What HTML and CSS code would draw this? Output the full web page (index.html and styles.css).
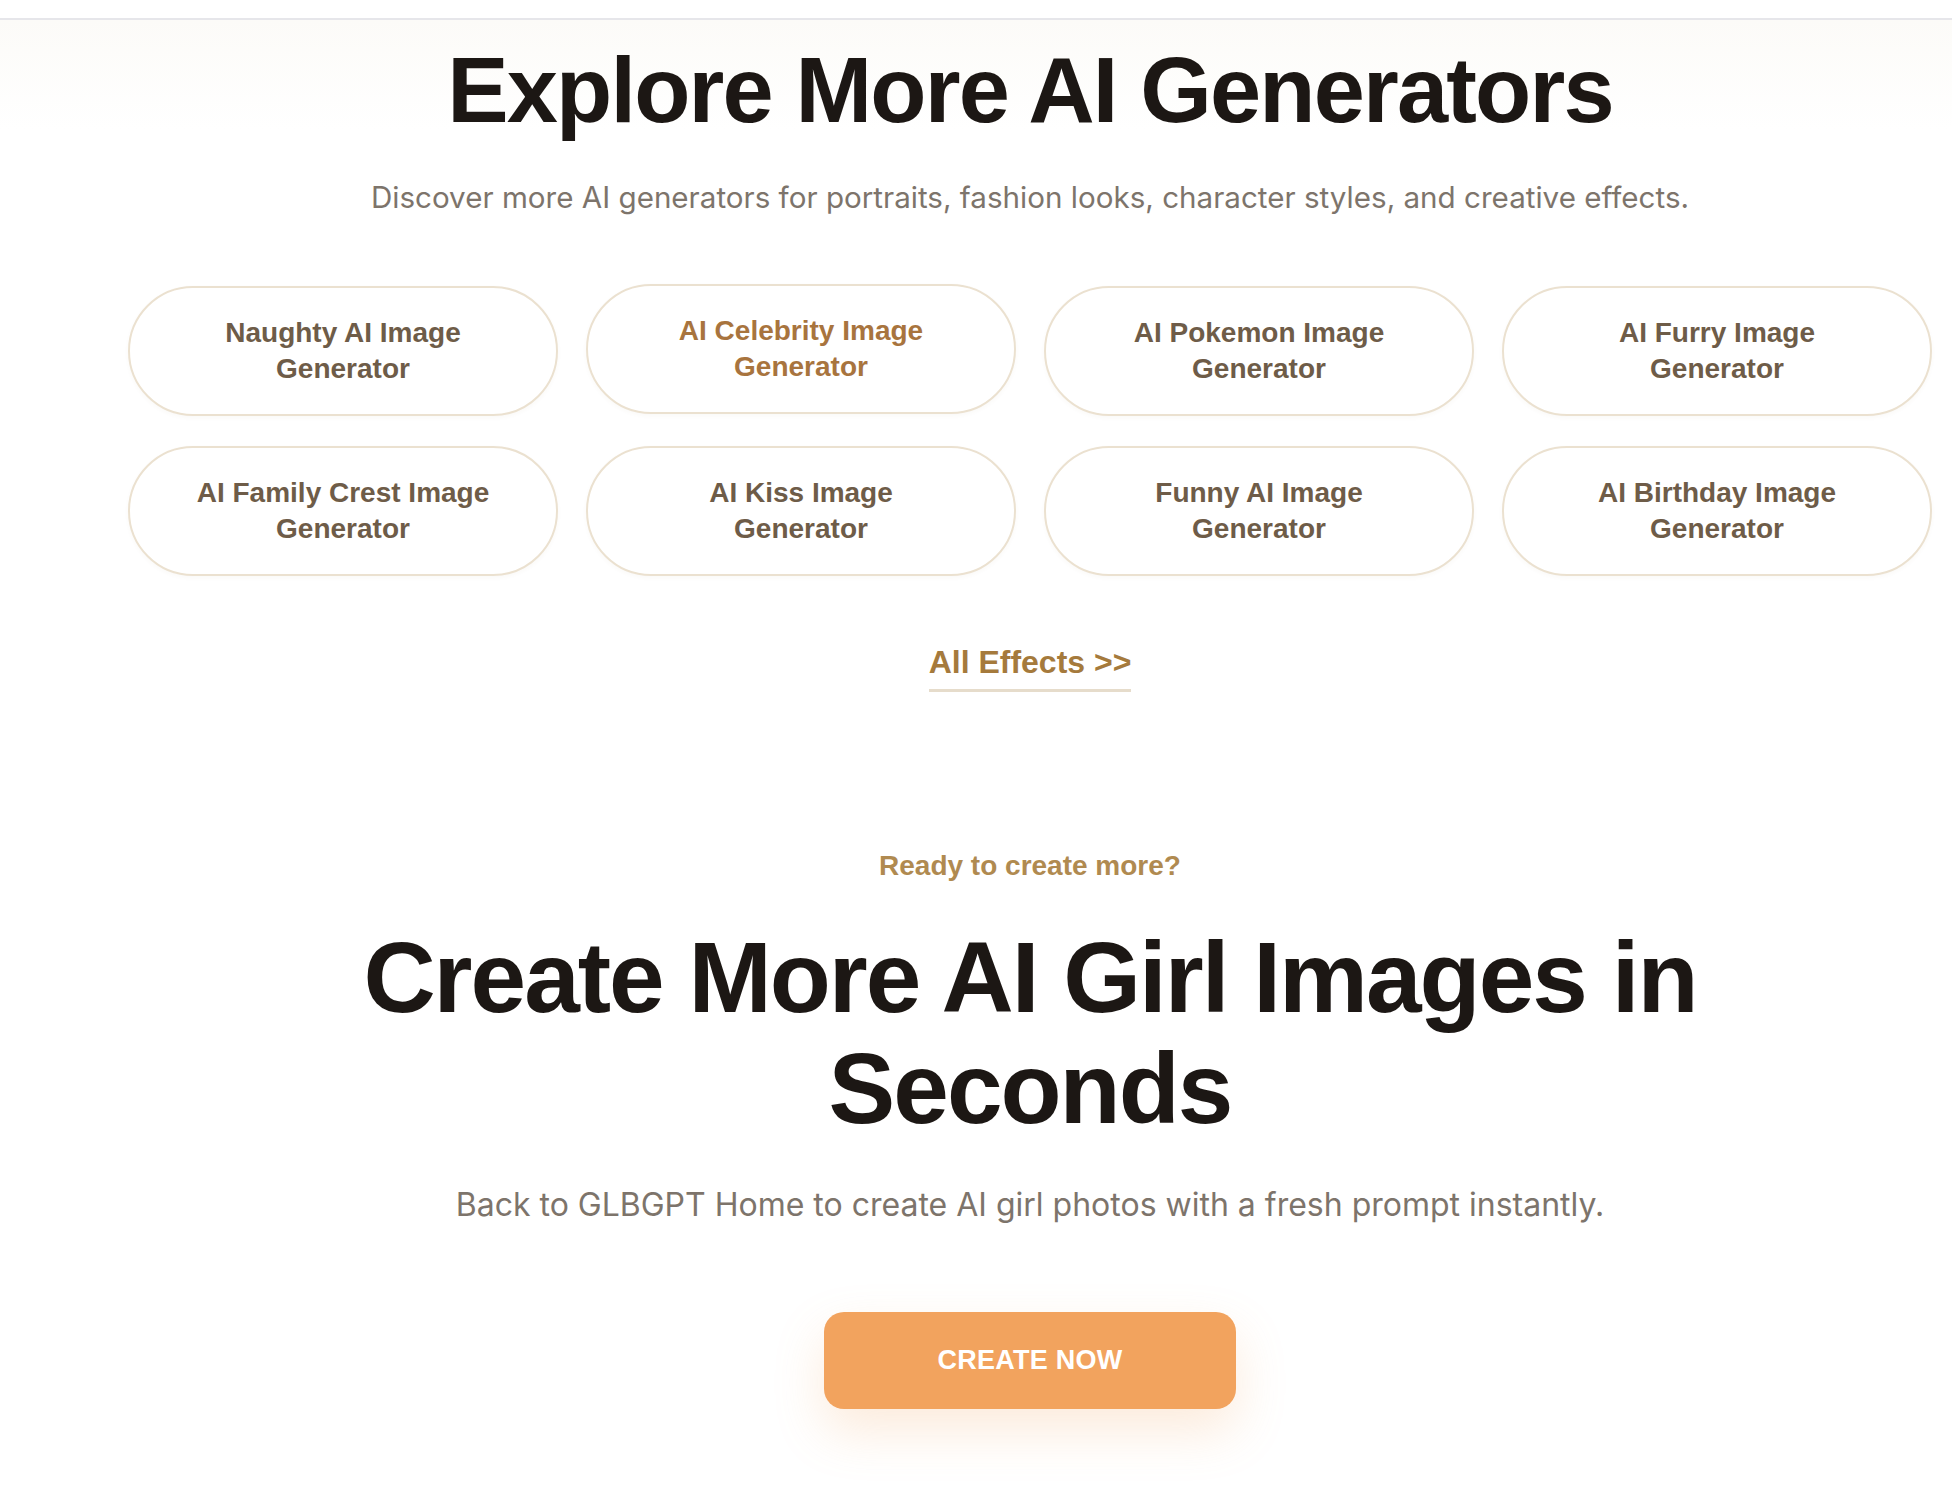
FILE: index.html
```html
<!DOCTYPE html>
<html lang="en">
<head>
<meta charset="utf-8">
<title>Explore More AI Generators</title>
<link rel="stylesheet" href="styles.css">
</head>
<body>
<div class="topbar"></div>
<main class="main">
  <section class="explore">
    <h1 class="explore-title">Explore More AI Generators</h1>
    <p class="explore-sub">Discover more AI generators for portraits, fashion looks, character styles, and creative effects.</p>
    <div class="pill-grid">
      <a class="pill" href="#">Naughty AI Image Generator</a>
      <a class="pill pill-active" href="#">AI Celebrity Image Generator</a>
      <a class="pill" href="#">AI Pokemon Image Generator</a>
      <a class="pill" href="#">AI Furry Image Generator</a>
      <a class="pill" href="#">AI Family Crest Image Generator</a>
      <a class="pill" href="#">AI Kiss Image Generator</a>
      <a class="pill" href="#">Funny AI Image Generator</a>
      <a class="pill" href="#">AI Birthday Image Generator</a>
    </div>
    <a class="all-effects" href="#">All Effects &gt;&gt;</a>
  </section>
  <section class="cta">
    <p class="cta-eyebrow">Ready to create more?</p>
    <h2 class="cta-title">Create More AI Girl Images in Seconds</h2>
    <p class="cta-text">Back to GLBGPT Home to create AI girl photos with a fresh prompt instantly.</p>
    <a class="cta-button" href="#">CREATE NOW</a>
  </section>
</main>
</body>
</html>
```
FILE: styles.css
```css
* { box-sizing: border-box; }
html, body { margin: 0; padding: 0; background: #ffffff; }
body {
  font-family: "Liberation Sans", Arial, sans-serif;
  color: #1c1714;
}
.topbar {
  height: 20px;
  background: #ffffff;
  border-bottom: 2px solid #e6e6ea;
}
.main {
  padding-left: 108px;
  background: linear-gradient(180deg, #fcfbf8 0px, #ffffff 110px);
}
.explore {
  display: flex;
  flex-direction: column;
  align-items: center;
  padding-top: 20px;
}
.explore-title {
  margin: 0;
  font-size: 92px;
  line-height: 1.1;
  font-weight: 700;
  letter-spacing: -0.02em;
  color: #1c1714;
}
.explore-sub {
  margin: 36px 0 0;
  font-family: Inter, "Liberation Sans", sans-serif;
  font-size: 29.6px;
  line-height: 1.4;
  color: #7d746b;
}
.pill-grid {
  margin-top: 67px;
  display: grid;
  grid-template-columns: repeat(4, 430px);
  grid-auto-rows: 130px;
  column-gap: 28px;
  row-gap: 30px;
}
.pill {
  display: flex;
  align-items: center;
  justify-content: center;
  text-align: center;
  padding: 0 58px;
  border: 2px solid #ebe1d0;
  border-radius: 65px;
  background: #ffffff;
  box-shadow: 0 2px 4px rgba(120, 90, 50, 0.04);
  color: #6e5c48;
  font-size: 28px;
  line-height: 36px;
  font-weight: 700;
  text-decoration: none;
}
.pill-active {
  color: #a8743e;
  transform: translateY(-2px);
}
.all-effects {
  margin-top: 67px;
  display: inline-block;
  font-size: 32px;
  line-height: 1.2;
  font-weight: 700;
  color: #a57a3c;
  text-decoration: none;
  padding-bottom: 8px;
  border-bottom: 3px solid #e6dccb;
}
.cta {
  display: flex;
  flex-direction: column;
  align-items: center;
  padding-top: 156px;
  padding-bottom: 90px;
}
.cta-eyebrow {
  margin: 0;
  font-size: 28px;
  line-height: 1.3;
  font-weight: 700;
  color: #b08a50;
}
.cta-title {
  margin: 38px 0 0;
  max-width: 1420px;
  text-align: center;
  font-size: 100px;
  line-height: 111px;
  font-weight: 700;
  letter-spacing: -0.02em;
  color: #1c1714;
}
.cta-text {
  margin: 39px 0 0;
  font-family: Inter, "Liberation Sans", sans-serif;
  font-size: 32px;
  line-height: 1.4;
  color: #7d746b;
}
.cta-button {
  margin-top: 84px;
  width: 412px;
  height: 97px;
  display: flex;
  align-items: center;
  justify-content: center;
  border-radius: 20px;
  background: #f2a35e;
  color: #ffffff;
  font-size: 27px;
  font-weight: 700;
  letter-spacing: 0.01em;
  text-decoration: none;
  box-shadow: 0 22px 50px rgba(242, 163, 94, 0.22);
}
```
